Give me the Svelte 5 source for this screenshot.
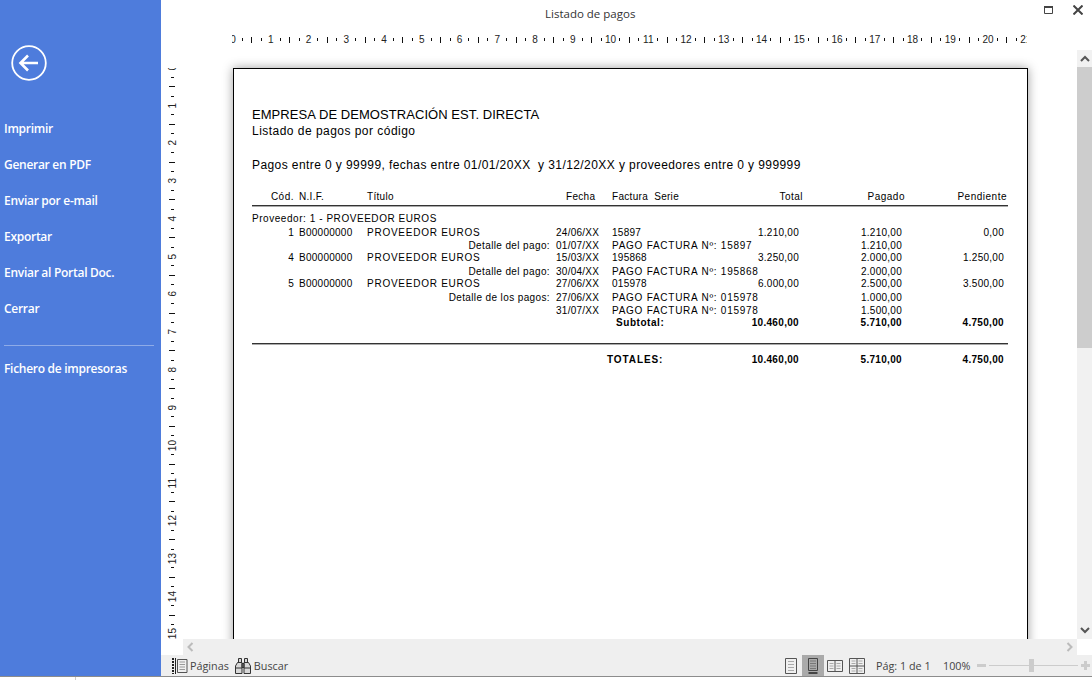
<script>
  const menuA = ['Imprimir', 'Generar en PDF', 'Enviar por e-mail', 'Exportar', 'Enviar al Portal Doc.', 'Cerrar'];
  const hTicks = Array.from({ length: 85 }, (_, i) => i);
  const vTicks = Array.from({ length: 61 }, (_, i) => i);
  const label = (i) => (i % 4 === 0 ? String(i / 4) : '');
  const rows = [
    { h: 'r13', cod: '1', nif: 'B00000000', tit: 'PROVEEDOR EUROS', fec: '24/06/XX', fac: '15897', tot: '1.210,00', pag: '1.210,00', pen: '0,00' },
    { h: 'r12', tit2: 'Detalle del pago:', fec: '01/07/XX', fac: 'PAGO FACTURA Nº: 15897', pag: '1.210,00' },
    { h: 'r14', cod: '4', nif: 'B00000000', tit: 'PROVEEDOR EUROS', fec: '15/03/XX', fac: '195868', tot: '3.250,00', pag: '2.000,00', pen: '1.250,00' },
    { h: 'r12', tit2: 'Detalle del pago:', fec: '30/04/XX', fac: 'PAGO FACTURA Nº: 195868', pag: '2.000,00' },
    { h: 'r14', cod: '5', nif: 'B00000000', tit: 'PROVEEDOR EUROS', fec: '27/06/XX', fac: '015978', tot: '6.000,00', pag: '2.500,00', pen: '3.500,00' },
    { h: 'r13', tit2: 'Detalle de los pagos:', fec: '27/06/XX', fac: 'PAGO FACTURA Nº: 015978', pag: '1.000,00' },
    { h: 'r12', fec: '31/07/XX', fac: 'PAGO FACTURA Nº: 015978', pag: '1.500,00' }
  ];
</script>

<div class="app">
  <aside class="side">
    <svg class="back" width="36" height="36" viewBox="0 0 36 36" fill="none" stroke="#fff">
      <circle cx="18" cy="18" r="16.8" stroke-width="1.8" />
      <path d="M9.5 18H27M17 10.5 9.5 18l7.5 7.5" stroke-width="2.6" />
    </svg>
    <nav class="menu">
      {#each menuA as m}<div class="item">{m}</div>{/each}
      <div class="sep"></div>
      <div class="item">Fichero de impresoras</div>
    </nav>
  </aside>

  <section class="main">
    <header class="top">
      <div class="title">Listado de pagos</div>
      <svg class="maxi" width="10" height="10" viewBox="0 0 10 10" fill="none" stroke="#444">
        <path d="M.5 1.5h8v7h-8z" /><path d="M0 2h9" stroke-width="2" />
      </svg>
      <svg class="close" width="10" height="10" viewBox="0 0 10 10" stroke="#444" stroke-width="2">
        <path d="M.5.5l9 9M9.5.5l-9 9" />
      </svg>
      <div class="hruler">
        {#each hTicks as i}
          <span class="cell">
            {#if i % 4 === 0}<span class="num">{label(i)}</span>
            {:else}<i class={i % 4 === 2 ? 'tk big' : 'tk'}></i>{/if}
          </span>
        {/each}
      </div>
    </header>

    <div class="view">
      <div class="vruler">
        {#each vTicks as i}
          <span class="vcell">
            {#if i % 4 === 0}<span class="vnum">{label(i)}</span>
            {:else}<i class={i % 4 === 2 ? 'vt big' : 'vt'}></i>{/if}
          </span>
        {/each}
      </div>
      <div class="canvas">
        <article class="page">
          <h1>EMPRESA DE DEMOSTRACIÓN EST. DIRECTA</h1>
          <h2>Listado de pagos por código</h2>
          <p class="range">Pagos entre 0 y 99999, fechas entre 01/01/20XX&nbsp; y 31/12/20XX y proveedores entre 0 y 999999</p>

          <div class="thead">
            <span class="tr">Cód.</span><span>N.I.F.</span><span>Título</span><span>Fecha</span><span class="fs">Factura&nbsp; Serie</span>
            <span class="tr">Total</span><span class="tr">Pagado</span><span class="tr">Pendiente</span>
          </div>
          <div class="prov">Proveedor: 1 - PROVEEDOR EUROS</div>
          {#each rows as r}
            <div class="row {r.h}">
              <span class="tr">{r.cod ?? ''}</span>
              <span>{r.nif ?? ''}</span>
              {#if r.tit2}<span class="tr lab">{r.tit2}</span>{:else}<span class="wide">{r.tit ?? ''}</span>{/if}
              <span>{r.fec}</span>
              <span class={r.fac.startsWith('PAGO') ? 'pago' : ''}>{r.fac}</span>
              <span class="tr">{r.tot ?? ''}</span>
              <span class="tr">{r.pag}</span>
              <span class="tr">{r.pen ?? ''}</span>
            </div>
          {/each}
          <div class="row sum r12">
            <span></span><span></span><span></span><span></span><span class="sub">Subtotal:</span>
            <span class="tr">10.460,00</span><span class="tr">5.710,00</span><span class="tr">4.750,00</span>
          </div>
          <div class="rule2"></div>
          <div class="row sum tot">
            <span></span><span></span><span></span><span></span><span class="sub2">TOTALES:</span>
            <span class="tr">10.460,00</span><span class="tr">5.710,00</span><span class="tr">4.750,00</span>
          </div>
        </article>
      </div>
      <div class="vscroll">
        <div class="sbtn"><svg width="10" height="7" viewBox="0 0 10 7" fill="none" stroke="#555" stroke-width="2"><path d="M1 6l4-4 4 4" /></svg></div>
        <div class="thumb"></div>
        <div class="track"></div>
        <div class="sbtn"><svg width="10" height="7" viewBox="0 0 10 7" fill="none" stroke="#555" stroke-width="2"><path d="M1 1l4 4 4-4" /></svg></div>
      </div>
    </div>

    <div class="hscroll">
      <svg width="8" height="10" viewBox="0 0 8 10" fill="none" stroke="#bbb" stroke-width="2"><path d="M6.5 1l-4 4 4 4" /></svg>
      <svg width="8" height="10" viewBox="0 0 8 10" fill="none" stroke="#bbb" stroke-width="2"><path d="M1.5 1l4 4-4 4" /></svg>
    </div>

    <footer class="status">
      <div class="tool">
        <svg width="16" height="16" viewBox="0 0 16 16" fill="none">
          <path d="M1 0v16" stroke-dasharray="2 1" stroke="#222" stroke-width="2" />
          <path d="M3.500 0v16" stroke="#222" />
          <path d="M5.500 1.500h9.500v13H5.500z" stroke="#555" />
          <path d="M7.500 4h5.500M7.500 6.500h5.500M7.500 9h5.500M7.500 11.500h5.500" stroke="#999" />
        </svg>
        <span>Páginas</span>
      </div>
      <div class="tool t2">
        <svg width="16" height="16" viewBox="0 0 16 16" fill="#d8d8d8" stroke="#333">
          <path d="M3.500.5h3v4h-3zM9.500.5h3v4h-3z" />
          <path d="M.5 8l2-3.500h4.500v11H.5zM15.500 8l-2-3.500H9v11h6.500z" />
          <path d="M7 5.500h2v4H7z" fill="#666" />
          <path d="M.5 10h6.500M9 10h6.500" />
        </svg>
        <span>Buscar</span>
      </div>
      <div class="views">
        <span class="vbtn"><svg width="12" height="16" viewBox="0 0 12 16" fill="none" stroke="#555"><path d="M.5.500h11v15H.5z" /><path d="M3 3.500h6M3 6.500h6M3 9.500h6M3 12.500h6" stroke="#aaa" /></svg></span>
        <span class="vbtn on"><svg width="10" height="16" viewBox="0 0 10 16" fill="none" stroke="#444"><path d="M.5.500h9v12H.5z" /><path d="M2 3h6M2 5.500h6M2 8h6M2 10.500h6" stroke="#777" /><path d="M.5 15h9" stroke-width="2" /></svg></span>
        <span class="vbtn"><svg width="16" height="12" viewBox="0 0 16 12" fill="none" stroke="#555"><path d="M.5.500h15v11H.5zM8 .5v11" /><path d="M2.500 3.500h4M2.500 6h4M2.500 8.500h4M9.500 3.500h4M9.500 6h4M9.500 8.500h4" stroke="#aaa" /></svg></span>
        <span class="vbtn"><svg width="16" height="16" viewBox="0 0 16 16" fill="none" stroke="#555"><path d="M.5.500h15v15H.5zM8 .5v15M.5 8h15" /><path d="M2.500 3h4M2.500 5.500h4M9.500 3h4M9.500 5.500h4M2.500 10.500h4M2.500 13h4M9.500 10.500h4M9.500 13h4" stroke="#aaa" /></svg></span>
      </div>
      <span class="pg">Pág: 1 de 1</span>
      <span class="zoomv">100%</span>
      <div class="slider">
        <i class="minus"></i><div class="line"><i class="knob"></i></div>
        <svg width="9" height="9" viewBox="0 0 9 9" stroke="#ccc" stroke-width="3"><path d="M4.500 0v9M0 4.500h9" /></svg>
      </div>
    </footer>
  </section>
  <div class="bottom"><i class="bmark"></i></div>
</div>

<style>
  :global(body) { margin: 0; background: #fff; }
  .app {
    width: 1092px; height: 680px; overflow: hidden;
    display: grid; grid-template-columns: 161px 1fr; grid-template-rows: 676px 4px;
    font-family: "Open Sans", "Noto Sans", sans-serif; color: #444;
  }
  .side { background: #4e7cdc; color: #fff; padding: 45px 0 0 10.5px; }
  .back { display: block; }
  .menu { margin: 30px 0 0 -6.5px; }
  .item { height: 36px; line-height: 36px; font-size: 12px; font-weight: 600; letter-spacing: -.28px; white-space: nowrap; }
  .sep { height: 1px; background: #8eabe8; margin: 18px 7px 5px 0; }

  .main { display: flex; flex-direction: column; min-width: 0; }
  .top { height: 50px; position: relative; }
  .title { padding: 6px 0 0 384px; font-size: 11.5px; line-height: 16px; color: #333; white-space: nowrap; }
  .maxi { position: absolute; left: 883px; top: 5px; }
  .close { position: absolute; left: 912px; top: 5px; }
  .hruler { display: flex; margin: 12px 0 0 71px; height: 11px; overflow: hidden; width: 795px; align-items: center; }
  .cell { flex: 0 0 9.45px; width: 9.45px; display: flex; justify-content: center; align-items: center; height: 11px; }
  .cell:first-child { margin-left: -3.7px; }
  .num { font: 10px/11px "Liberation Sans", sans-serif; color: #222; white-space: nowrap; }
  .tk { width: 1px; height: 3px; background: #111; display: block; }
  .tk.big { height: 6px; }

  .view { flex: 1; display: flex; min-height: 0; }
  .vruler { width: 22px; flex: none; display: flex; flex-direction: column; margin-top: 18px; overflow: hidden; }
  .vcell { flex: 0 0 9.45px; height: 9.45px; display: flex; align-items: center; justify-content: center; width: 22px; }
  .vcell:first-child { margin-top: -5px; }
  .vnum { font: 10px/11px "Liberation Sans", sans-serif; color: #222; writing-mode: vertical-rl; transform: rotate(180deg); white-space: nowrap; }
  .vt { width: 3px; height: 1px; background: #111; display: block; }
  .vt.big { width: 6px; }

  .canvas { flex: 1; min-width: 0; padding: 18px 0 0 50px; overflow: hidden; }
  .page {
    width: 756px; height: 700px; border: solid #000; border-width: 1.500px;
    padding: 38px 19px 0 18px; background: #fff; box-shadow: 0 0 10px rgba(0, 0, 0, .38);
    font-family: "Liberation Sans", Arial, sans-serif; color: #000; font-size: 10px;
  }
  h1 { margin: 0; font-size: 13px; font-weight: 400; line-height: 16px; white-space: nowrap; letter-spacing: .06px; }
  h2 { margin: 0; font-size: 12px; font-weight: 400; line-height: 16px; white-space: nowrap; letter-spacing: .47px; }
  .range { margin: 18px 0 0; font-size: 12px; line-height: 16px; white-space: nowrap; letter-spacing: .415px; }

  .thead, .row {
    display: grid;
    grid-template-columns: 42px 73px 189px 56px 100px 87px 103px 102px;
    white-space: nowrap;
  }
  .thead {
    margin-top: 16px; height: 16px; line-height: 16px; border-bottom: 1px solid #333; letter-spacing: .3px;
    box-shadow: 0 1px 0 #aaa; box-sizing: content-box;
    grid-template-columns: 42px 73px 199px 46px 100px 91px 102px 102px;
  }
  .thead .tr { letter-spacing: .5px; }
  .row > span:nth-child(2) { padding-left: 5px; }
  .thead > span:nth-child(2) { padding-left: 5px; }
  .prov { margin-top: 5.5px; line-height: 14px; height: 14px; letter-spacing: .55px; }
  .row { line-height: 13px; letter-spacing: .26px; }
  .r12 { height: 12px; }
  .r13 { height: 13px; }
  .r14 { height: 14px; }
  .tr { text-align: right; }
  .wide { letter-spacing: .75px; }
  .lab { letter-spacing: .38px; }
  .pago { letter-spacing: .74px; }
  .row > .tr:nth-child(3) { padding-right: 6px; }
  .sum { font-weight: 700; letter-spacing: .32px; }
  .sub { padding-left: 4px; letter-spacing: .55px; }
  .sub2 { margin-left: -5px; letter-spacing: .9px; }
  .rule2 { margin-top: 15px; height: 1px; background: #333; box-shadow: 0 1px 0 #aaa; }
  .tot { margin-top: 9.5px; }

  .vscroll { width: 15px; flex: none; display: flex; flex-direction: column; background: #f1f1f1; }
  .sbtn { height: 17px; display: flex; align-items: center; justify-content: center; }
  .thumb { height: 281px; background: #cdcdcd; }
  .track { flex: 1; }

  .hscroll { height: 16px; background: #efefef; margin: 0 15px 0 22px; display: flex; justify-content: space-between; align-items: center; padding: 0 3px; }
  .status { height: 21px; background: #efefef; display: flex; align-items: center; font-size: 10.8px; padding-left: 11px; color: #444; }
  .tool { display: flex; align-items: center; gap: 2px; }
  .t2 { margin-left: 6px; gap: 3px; }
  .views { margin-left: auto; display: flex; align-items: center; height: 21px; }
  .vbtn { width: 22px; height: 21px; display: flex; align-items: center; justify-content: center; }
  .vbtn.on { background: #aaa; }
  .pg { margin-left: 8px; width: 67px; white-space: nowrap; }
  .zoomv { width: 34px; white-space: nowrap; }
  .slider { display: flex; align-items: center; width: 113px; padding-right: 2px; }
  .minus { width: 9px; height: 3px; background: #ccc; display: block; }
  .line { flex: 1; height: 1px; background: #ccc; margin: 0 3px 0 3px; position: relative; }
  .knob { position: absolute; left: 40px; top: -6px; width: 5px; height: 13px; background: #ccc; display: block; }
  .bottom { grid-column: 1 / 3; background: #fff; border-top: 1.500px solid #8c8c8c; box-sizing: border-box; padding-left: 75px; }
  .bmark { display: block; width: 1px; height: 3px; background: #ccc; }
</style>
